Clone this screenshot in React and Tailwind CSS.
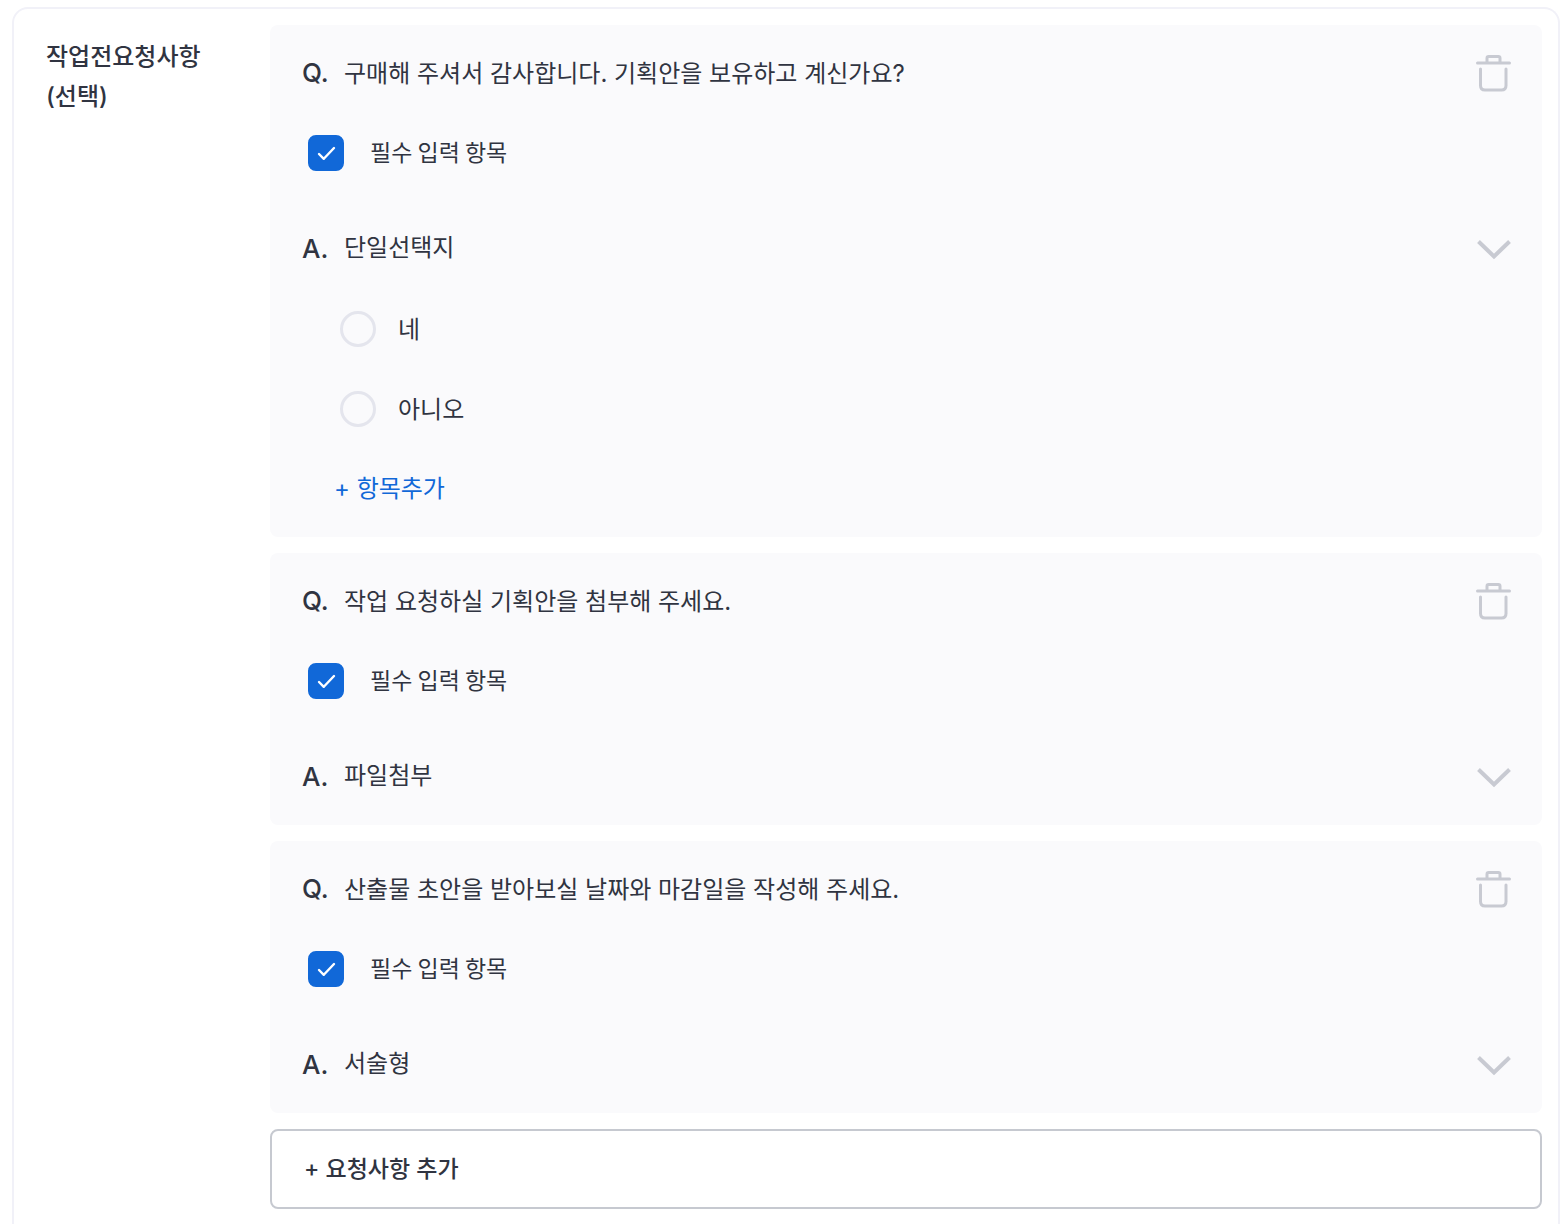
import { useState } from "react";

const QUESTIONS = [
  {
    id: "plan",
    question: "구매해 주셔서 감사합니다. 기획안을 보유하고 계신가요?",
    answer: "단일선택지",
    options: ["네", "아니오"],
  },
  { id: "file", question: "작업 요청하실 기획안을 첨부해 주세요.", answer: "파일첨부" },
  { id: "date", question: "산출물 초안을 받아보실 날짜와 마감일을 작성해 주세요.", answer: "서술형" },
];

function TrashIcon() {
  return (
    <svg width="36" height="40" viewBox="0 0 36 40" fill="none" stroke="#c8cad2" strokeWidth="3" aria-hidden="true">
      <path d="M1.5 10H33.5" strokeLinecap="round" />
      <path d="M11 9V5.2Q11 3.500 12.700 3.500H22.300Q24 3.500 24 5.200V9" />
      <path d="M4.500 16V32.500Q4.500 37 9 37H25.500Q30 37 30 32.500V16" strokeLinecap="round" />
    </svg>
  );
}

function ChevronIcon() {
  return (
    <svg width="36" height="24" viewBox="0 0 36 24" fill="none" stroke="#c8cad2" strokeWidth="4" aria-hidden="true">
      <path d="M2.500 4.500L18 19.500L33.500 4.500" />
    </svg>
  );
}

function QuestionCard({ item }) {
  const [required, setRequired] = useState(true);
  return (
    <section className="rounded-lg bg-[#fafafc] px-8 py-6">
      <div className="flex h-12 items-center">
        <span className="w-[42px] text-[26px] font-medium">Q.</span>
        <h3 className="flex-1 pt-0.5">{item.question}</h3>
        <button type="button" aria-label="질문 삭제" className="-mr-0.5">
          <TrashIcon />
        </button>
      </div>

      <label className="mt-8 ml-1.5 flex h-12 w-fit items-center gap-[26px] text-[23px]">
        <span className="relative flex size-9">
          <input
            type="checkbox"
            checked={required}
            onChange={(e) => setRequired(e.target.checked)}
            className="peer size-9 appearance-none rounded-lg border-2 border-[#e4e5ed] bg-white checked:border-[#1168d8] checked:bg-[#1168d8]"
          />
          <svg
            className="pointer-events-none absolute inset-0 hidden peer-checked:block"
            viewBox="0 0 36 36"
            fill="none"
            stroke="white"
            strokeWidth="2.4"
            strokeLinecap="round"
            strokeLinejoin="round"
            aria-hidden="true"
          >
            <path d="M11 19L15.800 23.800L26 13" />
          </svg>
        </span>
        <span className="pb-1 font-['Noto_Sans_CJK_KR',sans-serif]">필수 입력 항목</span>
      </label>

      <div className="mt-12 flex h-12 items-center">
        <span className="w-[42px] text-[26px] font-medium">A.</span>
        <span className="flex-1 pb-0.5">{item.answer}</span>
        <button type="button" aria-label="답변 유형 선택" className="-mr-0.5">
          <ChevronIcon />
        </button>
      </div>

      {item.options && (
        <div className="mt-8 ml-0.5">
          <div className="ml-9 flex flex-col gap-8">
            {item.options.map((option) => (
              <label key={option} className="flex h-12 w-fit items-center gap-[22px]">
                <input
                  type="radio"
                  name={item.id}
                  className="size-9 appearance-none rounded-full border-[3px] border-[#e4e5ed] checked:border-[10px] checked:border-[#1168d8]"
                />
                <span className="pt-0.5">{option}</span>
              </label>
            ))}
          </div>
          <button type="button" className="mt-8 ml-[30px] block h-12 text-[#1168d8]">
            + 항목추가
          </button>
        </div>
      )}
    </section>
  );
}

export default function App() {
  return (
    <main className="min-h-screen bg-white pt-[7px] pr-2 pl-3 font-['Inter','Noto_Sans_CJK_KR',sans-serif] text-[24px] leading-10 text-[#303441]">
      <div className="flex rounded-t-2xl border-2 border-b-0 border-[#f1f1f8] p-4">
        <h2 className="w-60 shrink-0 pt-3 pl-4 font-medium">
          작업전요청사항
          <br />
          (선택)
        </h2>
        <div className="flex min-w-0 flex-1 flex-col gap-4">
          {QUESTIONS.map((item) => (
            <QuestionCard key={item.id} item={item} />
          ))}
          <button
            type="button"
            className="h-20 rounded-lg border-2 border-[#c6c9d0] px-8 text-left text-[23px] font-medium"
          >
            + 요청사항 추가
          </button>
        </div>
      </div>
    </main>
  );
}
